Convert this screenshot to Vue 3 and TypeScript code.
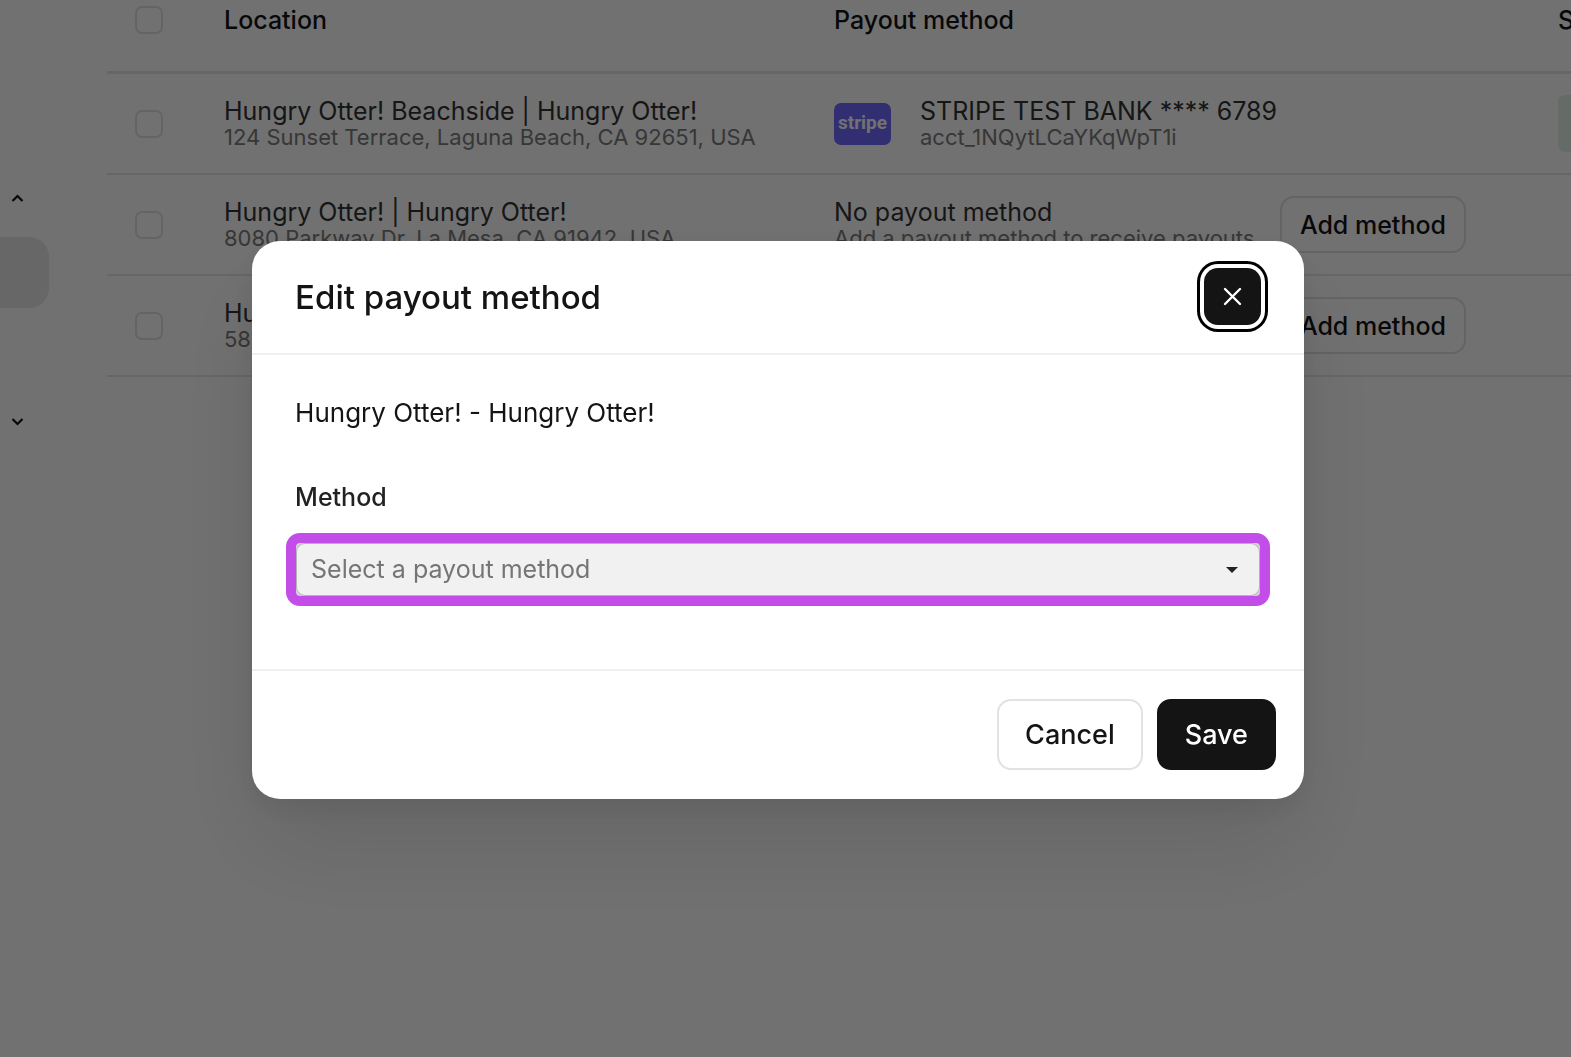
<script setup lang="ts">
import { ref } from 'vue'

interface LocationRow {
  name: string
  address: string
  method: string
  detail: string
  connected: boolean
}

const rows: LocationRow[] = [
  {
    name: 'Hungry Otter! Beachside | Hungry Otter!',
    address: '124 Sunset Terrace, Laguna Beach, CA 92651, USA',
    method: 'STRIPE TEST BANK **** 6789',
    detail: 'acct_1NQytLCaYKqWpT1i',
    connected: true,
  },
  {
    name: 'Hungry Otter! | Hungry Otter!',
    address: '8080 Parkway Dr, La Mesa, CA 91942, USA',
    method: 'No payout method',
    detail: 'Add a payout method to receive payouts',
    connected: false,
  },
  {
    name: 'Hu',
    address: '58',
    method: '',
    detail: '',
    connected: false,
  },
]

const selected = ref('')
</script>

<template>
  <div class="app">
    <nav class="sidebar" aria-label="Main">
      <button class="toggle" type="button" aria-label="Collapse section">
        <svg width="13" height="9" viewBox="0 0 13 9"><path d="M1.5 7 6.5 2l5 5" /></svg>
      </button>
      <a class="active-link" href="#" aria-label="Payouts"></a>
      <button class="toggle" type="button" aria-label="Expand section">
        <svg width="13" height="9" viewBox="0 0 13 9"><path d="M1.5 2l5 5 5-5" /></svg>
      </button>
    </nav>

    <main class="content">
      <table class="locations">
        <colgroup>
          <col class="col-check" />
          <col class="col-location" />
          <col class="col-method" />
          <col />
        </colgroup>
        <thead>
          <tr>
            <th><input type="checkbox" aria-label="Select all locations" /></th>
            <th>Location</th>
            <th>Payout method</th>
            <th>S</th>
          </tr>
        </thead>
        <tbody>
          <tr v-for="(row, i) in rows" :key="i">
            <td><input type="checkbox" :aria-label="row.name" /></td>
            <td>
              <div class="primary">{{ row.name }}</div>
              <div class="secondary">{{ row.address }}</div>
            </td>
            <td>
              <div class="method">
                <span v-if="row.connected" class="stripe">stripe</span>
                <div class="method-text">
                  <div class="primary">{{ row.method }}</div>
                  <div class="secondary">{{ row.detail }}</div>
                </div>
                <button v-if="!row.connected" class="add" type="button">Add method</button>
              </div>
            </td>
            <td><div v-if="row.connected" class="status"></div></td>
          </tr>
        </tbody>
      </table>
    </main>

    <div class="overlay">
      <section class="modal" role="dialog" aria-modal="true" aria-labelledby="modal-title">
        <header class="modal-header">
          <h2 id="modal-title">Edit payout method</h2>
          <button class="close" type="button" aria-label="Close">
            <svg width="19" height="19" viewBox="0 0 19 19"><path d="M2 2l15 15M17 2 2 17" /></svg>
          </button>
        </header>
        <div class="modal-body">
          <p class="location-name">Hungry Otter! - Hungry Otter!</p>
          <label for="method">Method</label>
          <div class="select-frame">
            <select id="method" v-model="selected">
              <option value="">Select a payout method</option>
            </select>
            <svg class="caret" width="12" height="6" viewBox="0 0 12 6"><path d="M0 0h12L6 6z" /></svg>
          </div>
        </div>
        <footer class="modal-footer">
          <button class="btn" type="button">Cancel</button>
          <button class="btn btn-dark" type="button">Save</button>
        </footer>
      </section>
    </div>
  </div>
</template>

<style>
body {
  background: #fff;
}
</style>

<style scoped>
.app {
  display: flex;
  min-height: 100vh;
  overflow: hidden;
  font-family: Inter, 'Liberation Sans', sans-serif;
  color: #141414;
}

* {
  box-sizing: border-box;
}

button,
select {
  font-family: inherit;
  color: inherit;
}

.sidebar {
  flex: 0 0 107px;
  padding-top: 186px;
}

.toggle {
  display: flex;
  align-items: center;
  width: 36px;
  height: 24px;
  padding: 0 11px;
  border: 0;
  background: none;
}

.toggle svg {
  flex: none;
  fill: none;
  stroke: #141414;
  stroke-width: 2.2;
}

.active-link {
  display: block;
  width: 49px;
  height: 71px;
  margin: 27px 0 101px;
  border-radius: 0 20px 20px 0;
  background: #e9e9e9;
}

.content {
  flex: 1;
  min-width: 0;
  overflow: hidden;
}

.locations {
  width: 118%;
  border-collapse: separate;
  border-spacing: 0;
  table-layout: fixed;
}

.col-check {
  width: 89px;
}

.col-location {
  width: 610px;
}

.col-method {
  width: 724px;
}

th,
td {
  padding: 0 28px;
  text-align: left;
}

th {
  height: 74px;
  padding-bottom: 31px;
  border-bottom: 3px solid #e7e7e7;
  font-size: 25px;
  line-height: 28px;
  font-weight: 500;
}

td {
  height: 101px;
  border-bottom: 2px solid #e7e7e7;
}

input[type='checkbox'] {
  display: block;
  width: 28px;
  height: 28px;
  margin: 0;
  appearance: none;
  border: 2px solid #e1e1e1;
  border-radius: 7px;
}

.primary {
  font-size: 25px;
  line-height: 28px;
  color: #333;
  white-space: nowrap;
}

.secondary {
  padding-bottom: 2px;
  font-size: 22px;
  line-height: 24px;
  color: #7c7c7c;
  white-space: nowrap;
}

.method {
  display: flex;
  align-items: center;
  margin-right: 36px;
}

.method-text {
  flex: 1;
}

.stripe {
  width: 57px;
  margin-right: 29px;
  padding-bottom: 2px;
  border-radius: 7px;
  background: #7068ff;
  color: #fff;
  font-family: Roboto, sans-serif;
  font-size: 19px;
  line-height: 40px;
  font-weight: 700;
  text-align: center;
}

.add {
  height: 57px;
  padding: 0 18px;
  border: 2px solid #e1e1e1;
  border-radius: 14px;
  background: none;
  font-size: 25px;
  font-weight: 500;
  white-space: nowrap;
}

.status {
  height: 57px;
  border-radius: 7px;
  background: #e4f2e9;
}

.overlay {
  position: fixed;
  inset: 0;
  display: flex;
  align-items: center;
  justify-content: center;
  padding: 0 15px 18px 0;
  background: rgba(0, 0, 0, 0.557);
}

.modal {
  width: 67.6%;
  border-radius: 28px;
  background: #fff;
  box-shadow: 0 50px 100px rgba(0, 0, 0, 0.1), 0 10px 30px rgba(0, 0, 0, 0.08);
}

.modal-header {
  display: flex;
  align-items: center;
  justify-content: space-between;
  height: 114px;
  padding: 0 43px;
  border-bottom: 2px solid #f0f0f0;
}

h2 {
  margin: 0;
  font-size: 33px;
  line-height: 42px;
  font-weight: 500;
}

.close {
  display: flex;
  align-items: center;
  justify-content: center;
  width: 57px;
  height: 57px;
  padding: 0;
  border: 0;
  border-radius: 14px;
  background: #141414;
  box-shadow: 0 0 0 4px #fff, 0 0 0 7px #000;
}

.close svg {
  fill: none;
  stroke: #fff;
  stroke-width: 2.4;
  stroke-linecap: round;
}

.modal-body {
  display: flex;
  flex-direction: column;
  padding: 40px 34px 63px;
}

.location-name {
  margin: 0 9px;
  font-size: 26px;
  line-height: 36px;
}

label {
  margin: 44px 9px 14px;
  font-size: 25px;
  line-height: 44px;
  color: #222;
  font-weight: 500;
}

.select-frame {
  position: relative;
  height: 73px;
  border: 10px solid #c34de9;
  border-radius: 14px;
  background: #d8d0da;
}

select {
  width: 100%;
  height: 53px;
  padding: 0 14px;
  appearance: none;
  border: 1px solid #b4b4b4;
  border-radius: 9px;
  background: #f1f1f1;
  color: #757575;
  font-size: 25px;
}

.caret {
  position: absolute;
  right: 22px;
  top: 24px;
  fill: #222;
}

.modal-footer {
  display: flex;
  justify-content: flex-end;
  gap: 14px;
  padding: 28px 28px 29px;
  border-top: 2px solid #f0f0f0;
}

.btn {
  height: 71px;
  padding: 0 26px;
  border: 2px solid #e2e2e2;
  border-radius: 14px;
  background: #fff;
  font-size: 27px;
  font-weight: 500;
}

.btn-dark {
  border-color: #141414;
  background: #141414;
  color: #fff;
}
</style>
